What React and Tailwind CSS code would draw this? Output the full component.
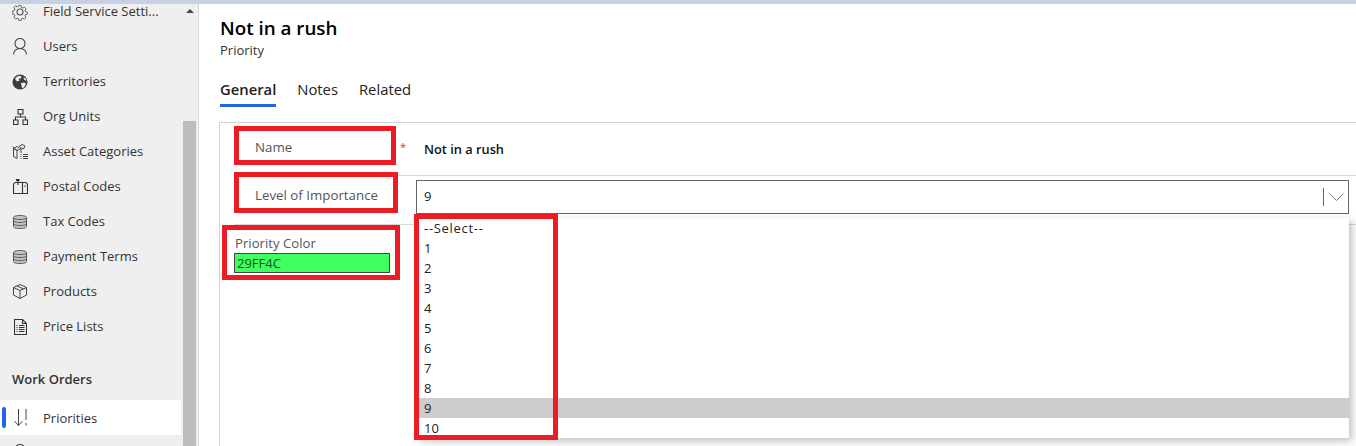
const font = "font-['Open_Sans','Noto_Sans',sans-serif]";

function GearIcon() {
  return (
    <svg width="18" height="18" viewBox="0 0 18 18" fill="none" stroke="#555" strokeWidth="1.1">
      <circle cx="9" cy="9" r="3" />
      <path d="M7.6 1.5h2.8l.4 2.2 1.5.7 1.9-1.2 2 2-1.2 1.9.6 1.5 2 .5v2.600l-2 .5-.6 1.5 1.2 1.9-2 2-1.9-1.2-1.5.7-.4 1.900H7.600l-.4-2-1.5-.6-1.900 1.200-2-2 1.200-1.900-.6-1.500-2-.5V7.600l2-.5.6-1.500-1.200-1.900 2-2 1.900 1.200 1.500-.7z" transform="translate(1.400 1.400) scale(.84)" />
    </svg>
  );
}

function UserIcon() {
  return (
    <svg width="16" height="17" viewBox="0 0 16 17" fill="none" stroke="#444" strokeWidth="1.1">
      <circle cx="8" cy="5.500" r="5" />
      <path d="M1.500 16.500c0-3.200 2.400-6 6.500-6s6.500 2.800 6.500 6" />
    </svg>
  );
}

function GlobeIcon() {
  return (
    <svg width="16" height="16" viewBox="0 0 16 16">
      <circle cx="8" cy="8" r="7.500" fill="#3c3c3c" />
      <path d="M3.500 3.500 7 1.800 9.500 2.500 9 4.500 6.500 4.500 7.500 6.500 5.500 7.500 3.500 6zM9 9l3.500-.5L14 10l-2 3.500-2 .5zM11.500 3 14 5l.5 2L12 5.500z" fill="#efefef" />
    </svg>
  );
}

function OrgIcon() {
  return (
    <svg width="15" height="16" viewBox="0 0 15 16" fill="none" stroke="#333" strokeWidth="1.100">
      <path d="M5 .5h5v4.500H5zM.5 11h4.500v4.500H.5zM10 11h4.500v4.500H10zM7.500 5v3M2.500 11V8h10v3" />
    </svg>
  );
}

function AssetIcon() {
  return (
    <svg width="16" height="16" viewBox="0 0 16 16" fill="none" stroke="#444" strokeWidth="1">
      <path d="M1.500 4.500v8l3.500 2v-8zM5 6.500l4-2M1.500 4.500 5 2.500 7 4M.5 2.500 5 6.500M7 2.500 10 .5l3 1.500-1.500 3-3.500-1.500zM9 5v4" />
      <path d="M8.500 10.500h1M8.500 12.500h1M8.500 14.500h1M11 10.500h5M11 12.500h5M11 14.500h5" />
    </svg>
  );
}

function MailboxIcon() {
  return (
    <svg width="15" height="15" viewBox="0 0 15 15" fill="none" stroke="#333" strokeWidth="1.100">
      <path d="M.5 14.500V6C.5 4.500 1.500 3.500 3 3.500h9c1.500 0 2.500 1 2.500 2.500v8.500zM9.500 3.500v11M5 6V.5" />
      <path d="M3 1h3.500" strokeWidth="2" />
      <path d="M12 6.500v1.500" />
    </svg>
  );
}

function StackIcon() {
  return (
    <svg width="14" height="14" viewBox="0 0 14 14" fill="#c4c4c4" stroke="#555" strokeWidth="1">
      <path d="M.5 2.500C.5 1.200 3.500.5 7 .5s6.500.7 6.500 2v9c0 1.300-3 2-6.500 2s-6.500-.7-6.500-2z" />
      <path d="M.5 2.500c0 1.300 3 2 6.500 2s6.500-.7 6.500-2M.5 5.500c0 1.300 3 2 6.500 2s6.500-.7 6.500-2M.5 8.500c0 1.300 3 2 6.500 2s6.500-.7 6.500-2" fill="none" />
    </svg>
  );
}

function BoxIcon() {
  return (
    <svg width="14" height="15" viewBox="0 0 14 15" fill="none" stroke="#444" strokeWidth="1">
      <path d="M7 .5 13.500 3.500v7.500L7 14.500.5 11V3.500zM.5 3.500 7 6.500l6.500-3M7 6.500v8M4 2l6.500 3" />
    </svg>
  );
}

function DocIcon() {
  return (
    <svg width="13" height="16" viewBox="0 0 13 16" fill="none" stroke="#333" strokeWidth="1.100">
      <path d="M.5.500h8l4 4v11H.5zM8.500.5v4h4" />
      <path d="M2.500 6.500h1M2.500 8.500h1M2.500 10.500h1M2.500 12.500h1M5 6.500h5.500M5 8.500h5.500M5 10.500h5.500M5 12.500h5.500" />
    </svg>
  );
}

function PriorityIcon() {
  return (
    <svg width="13" height="17" viewBox="0 0 13 17" fill="none" stroke="#444" strokeWidth="1">
      <path d="M4.500 0v16.500M.5 12l4 4.500 4-4.500M12 0v11M12 14v2.500" />
    </svg>
  );
}

function NavRow({ icon, label, active }) {
  return (
    <div className={`relative flex h-[35px] items-center text-[13px] text-[#333] ${active ? "bg-white" : ""}`}>
      {active && <span className="absolute left-[2px] top-[7px] h-[21px] w-[4px] rounded bg-[#1f63ee]" />}
      <span className="flex w-[43px] justify-center pr-[3px]">{icon}</span>
      <span className={active ? "pt-[2px]" : ""}>{label}</span>
    </div>
  );
}

const levels = ["--Select--", "1", "2", "3", "4", "5", "6", "7", "8", "9", "10"];

export default function App() {
  return (
    <div className={`flex h-[446px] w-[1356px] flex-col overflow-hidden bg-white ${font}`}>
      <div className="h-[4px] shrink-0 bg-[#c6d1e4]" />
      <div className="flex min-h-0 flex-1">
        {/* sidebar */}
        <aside className="flex w-[199px] shrink-0 overflow-hidden border-r border-[#d8d8d8] bg-[#efefef]">
          <nav className="-mt-[10px] w-[181px] shrink-0">
            <NavRow icon={<GearIcon />} label="Field Service Setti..." />
            <NavRow icon={<UserIcon />} label="Users" />
            <NavRow icon={<GlobeIcon />} label="Territories" />
            <NavRow icon={<OrgIcon />} label="Org Units" />
            <NavRow icon={<AssetIcon />} label="Asset Categories" />
            <NavRow icon={<MailboxIcon />} label="Postal Codes" />
            <NavRow icon={<StackIcon />} label="Tax Codes" />
            <NavRow icon={<StackIcon />} label="Payment Terms" />
            <NavRow icon={<BoxIcon />} label="Products" />
            <NavRow icon={<DocIcon />} label="Price Lists" />
            <div className="flex h-[56px] items-end pb-[11px] pl-[12px] text-[13px] font-semibold text-[#333]">Work Orders</div>
            <NavRow active icon={<PriorityIcon />} label="Priorities" />
            <NavRow icon={<UserIcon />} label="" />
          </nav>
          <div className="ml-[2px] w-[13px] shrink-0">
            <div className="flex h-[117px] justify-center pt-[5px]">
              <span className="h-0 w-0 border-x-[4px] border-b-[4px] border-x-transparent border-b-[#444]" />
            </div>
            <div className="h-full bg-[#bdbdbd]" />
          </div>
        </aside>

        {/* main form */}
        <main className="min-w-0 flex-1 pl-[21px] pt-[9px]">
          <h1 className="text-[18.800px] font-semibold leading-[30px] text-black">Not in a rush</h1>
          <p className="-mt-[1px] text-[13px] font-medium leading-[16px] text-[#333]">Priority</p>
          <div className="mt-[21px] flex gap-[21px] text-[14.800px] leading-[20px] text-[#222]">
            <span className="border-b-[3px] border-[#2266e3] pb-[5px] font-semibold">General</span>
            <span>Notes</span>
            <span>Related</span>
          </div>
          <section className="relative -ml-[1px] mt-[15px] h-[400px] border-l border-t border-[#d1d1d1]">
            <div className="ml-[14px] flex h-[53px] items-center border-b border-[#d8d8d8]">
              <span className="w-[166px] pb-[3px] pl-[21px] text-[13.300px] text-[#555]">Name</span>
              <span className="w-[24px] pb-[4px] text-[11px] text-[#e03131]">*</span>
              <span className="pt-[2px] text-[12.800px] font-semibold text-[#111]">Not in a rush</span>
            </div>
            <div className="ml-[14px] flex h-[49px] items-start border-b border-[#d8d8d8] pt-[4px]">
              <span className="w-[182px] pl-[21px] pt-[6px] text-[13.300px] text-[#555]">Level of Importance</span>
              <div className="flex h-[34px] w-[933px] items-center justify-between border border-[#666] bg-white pl-[7px] pr-[4px] text-[13px] text-[#222]">
                <span>9</span>
                <span className="flex h-[18px] items-center border-l border-[#666] pl-[5px]">
                  <svg width="15" height="9" viewBox="0 0 15 9" fill="none" stroke="#777" strokeWidth="1">
                    <path d="M.5.5l7 7 7-7" />
                  </svg>
                </span>
              </div>
            </div>
            <div className="ml-[14px] pt-[9px] text-[13.200px] text-[#555]">
              <p className="pl-[1px] leading-[18px]">Priority Color</p>
              <div className="mt-[1px] h-[20px] w-[156px] border border-[#444] bg-[#40ff60] pl-[2px] text-[13px] leading-[18px] text-[#14501f]">29FF4C</div>
            </div>

            {/* open select list */}
            <ul className="absolute left-[196px] top-[95px] w-[933px] bg-white text-[13px] leading-[20px] text-[#222] shadow-[3px_3px_8px_rgba(0,0,0,0.25)]">
              {levels.map(level => (
                <li key={level} className={`h-[20px] pl-[8px] ${level === "9" ? "bg-[#cccccc]" : ""} ${level === "--Select--" ? "tracking-[0.7px]" : ""}`}>{level}</li>
              ))}
            </ul>

            {/* red annotation boxes */}
            <div className="absolute left-[14px] top-[3px] h-[39px] w-[162px] border-[5px] border-[#ed1c24]" />
            <div className="absolute left-[14px] top-[49px] h-[41px] w-[164px] border-[5px] border-[#ed1c24]" />
            <div className="absolute left-[2px] top-[102px] h-[55px] w-[178px] border-[5px] border-[#ed1c24]" />
            <div className="absolute left-[194px] top-[91px] h-[226px] w-[144px] border-[5px] border-[#ed1c24]" />
          </section>
        </main>
      </div>
    </div>
  );
}
